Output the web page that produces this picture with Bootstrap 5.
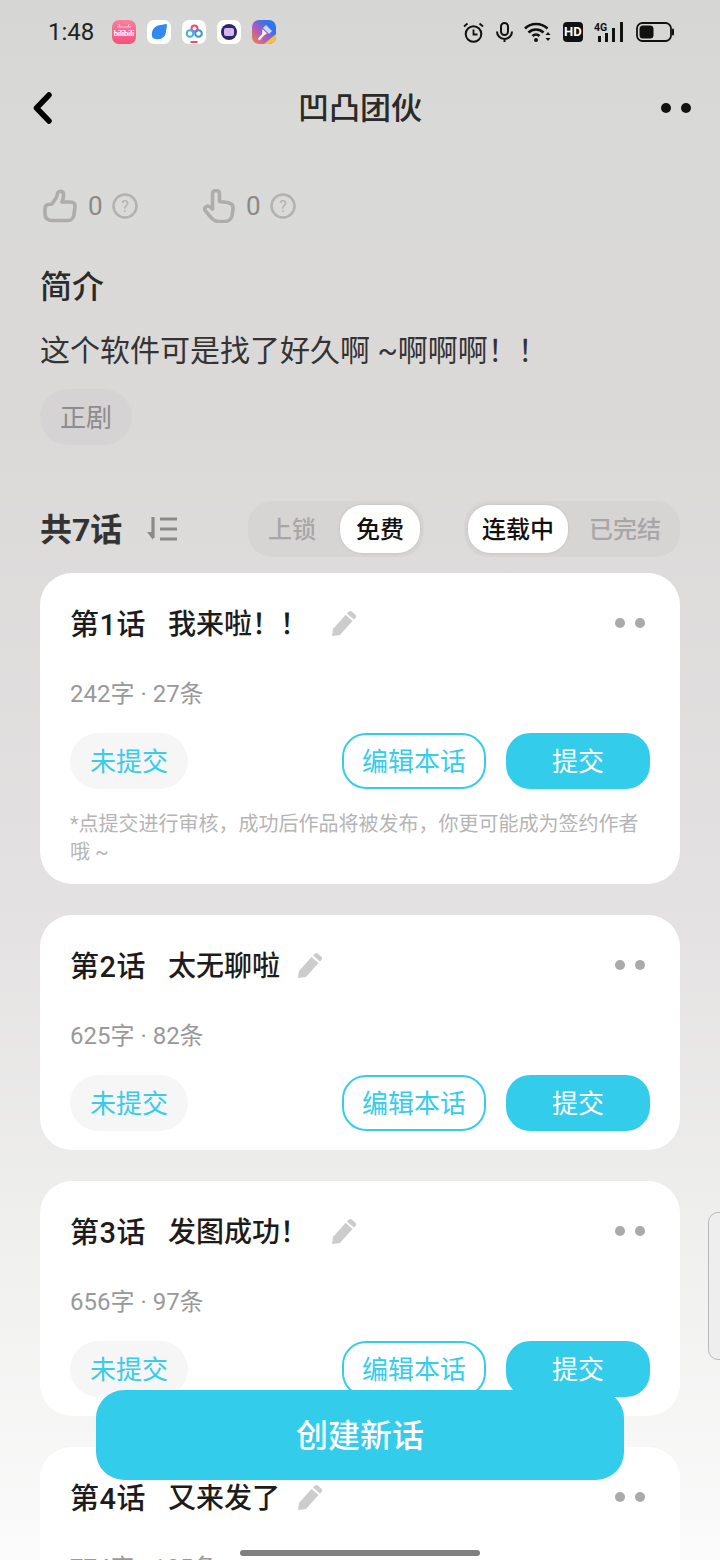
<!DOCTYPE html>
<html lang="zh-CN">
<head>
    <meta charset="UTF-8">
    <meta name="viewport" content="width=device-width, initial-scale=1.0">
    <title>凹凸团伙</title>
    <link href="https://cdn.jsdelivr.net/npm/bootstrap@5.3.0/dist/css/bootstrap.min.css" rel="stylesheet">
    <style>
        html, body { height: 1560px; overflow: hidden; }
        body {
            font-family: Roboto, "Noto Sans CJK SC", sans-serif;
            background: linear-gradient(180deg, #d6d6d4 0, #d9dad7 130px, #dbd9d8 400px, #e3e1e1 900px, #f0f0ef 1250px, #fbfbfb 1560px);
            color: #222;
        }
        .screen { width: 720px; height: 1560px; overflow: hidden; }
        .status-row { height: 64px; padding: 0 46px 0 48px; }
        .clock-text { font-size: 24px; width: 46px; margin-right: 18px; color: #222; line-height: 1; }
        .app-tiles { gap: 11px; }
        .app-tiles svg { display: block; }
        .sys-icons { gap: 11.6px; }
        .hd-box { width: 20px; height: 20px; background: #111; color: #fff; border-radius: 4px; font-size: 13px; font-weight: 700; line-height: 20px; text-align: center; }
        .top-row { height: 88px; padding: 0 29px 0 33px; }
        .top-title { font-size: 31px; font-weight: 500; color: #2a2a2a; line-height: 1; left: 0; right: 0; }
        .round-dots { gap: 10px; }
        .round-dots i { display: block; width: 10px; height: 10px; border-radius: 50%; background: #111; }
        .content-wrap { padding: 36px 40px 0; }
        .react-row { height: 36px; padding-left: 3px; }
        .react-item { width: 158px; }
        .react-count { font-size: 26px; color: #8b8989; margin: 0 9px 0 11px; line-height: 1; }
        .head-text { font-size: 32px; font-weight: 500; line-height: 44px; margin-top: 41px; color: #2b2b2b; }
        .desc-text { font-size: 30px; line-height: 44px; height: 44px; margin-top: 20px; color: #333; white-space: nowrap; }
        .genre-tag { width: 92px; height: 56px; margin-top: 16px; padding-top: 2px; border-radius: 28px; background: #d5d3d3; color: #8e8c8c; font-size: 26px; }
        .tool-row { height: 56px; margin-top: 56px; }
        .count-text { font-size: 32px; font-weight: 700; color: #333; line-height: 1; margin-right: 25px; padding-top: 1px; }
        .seg-box { height: 56px; padding: 4px; border-radius: 24px; background: #d7d4d4; font-size: 24px; font-weight: 500; color: #a8a6a6; flex: none; }
        .seg-box > span { flex: none; height: 48px; padding-top: 2px; white-space: nowrap; display: flex; align-items: center; justify-content: center; border-radius: 22px; }
        .seg-later { margin-left: 40px; }
        .seg-on { background: #fff; color: #111; box-shadow: 0 0 3px rgba(0, 0, 0, .12); }
        .seg-88 { width: 88px; padding-right: 8px; } .seg-80 { width: 80px; } .seg-100 { width: 100px; } .seg-108 { width: 108px; padding-left: 6px; }
        .ep-list { margin-top: 16px; gap: 31px; }
        .ep-card { border: 0; border-radius: 32px; background: #fff; padding: 32px 30px 19px; }
        .ep-title { height: 36px; font-size: 28px; font-weight: 500; color: #1c1c1c; line-height: 36px; }
        .ep-title > span { padding-top: 2px; height: 36px; }
        .ep-num { margin-right: 22px; font-size: 29px; letter-spacing: .5px; }
        .mark-tc { font-family: "Noto Sans CJK TC", sans-serif; line-height: 1; }
        .ep-pen { margin-left: 17px; margin-top: 2px; }
        .ep-pen-wide { margin-left: 23px; }
        .ep-dots { gap: 10px; padding-right: 5px; margin-top: 0; }
        .ep-dots i { display: block; width: 10px; height: 10px; border-radius: 50%; background: #aaa; }
        .ep-meta { font-size: 24px; color: #999; line-height: 36px; margin-top: 35px; }
        .ep-actions { margin-top: 21px; height: 56px; }
        .btn.state-btn, .btn.edit-btn, .btn.send-btn { height: 56px; font-size: 26px; padding: 2px 0 0; line-height: 1; color: #35cdea; display: flex; align-items: center; justify-content: center; }
        .btn.state-btn { width: 118px; border-radius: 28px; background: #f6f6f6; border: 0; }
        .btn.edit-btn { width: 144px; border-radius: 24px; background: #fff; border: 2px solid #35cdea; margin-right: 20px; }
        .btn.send-btn { width: 144px; border-radius: 24px; background: #33cdeb; border: 0; color: #fff; }
        .ep-note { font-size: 20px; line-height: 28px; color: #b5b5b5; margin-top: 21px; margin-bottom: -1px; }
        .btn.new-btn { left: 96px; top: 1390px; width: 528px; height: 90px; padding-top: 8px; border: 0; border-radius: 28px; background: #33cdeb; color: #fff; font-size: 32px; font-weight: 500; }
        .home-bar { left: 240px; top: 1550px; width: 240px; height: 6px; border-radius: 3px; background: #808080; }
        .side-handle { left: 708px; top: 1212px; width: 14px; height: 148px; border: 1px solid #b9b9b9; border-radius: 10px 0 0 10px; background: #eee; }
    </style>
</head>
<body>
    <div class="screen position-relative">
        <div class="status-row d-flex align-items-center">
            <span class="clock-text">1:48</span>
            <div class="app-tiles d-flex">
                <svg width="24" height="24" viewBox="0 0 24 24">
                    <defs><linearGradient id="pk" x1="0" y1="0" x2="0" y2="1"><stop offset="0" stop-color="#fb7f9d"/><stop offset="1" stop-color="#f4527a"/></linearGradient></defs>
                    <rect width="24" height="24" rx="7" fill="url(#pk)"/>
                    <path d="M5 7h14M7 4l1 3M17 4l-1 3" stroke="#fff" stroke-width=".8" opacity=".7"/>
                    <text x="12" y="16" text-anchor="middle" font-size="7.500" font-weight="700" fill="#fff" font-family="Roboto, sans-serif">bilibili</text>
                </svg>
                <svg width="24" height="24" viewBox="0 0 24 24">
                    <rect width="24" height="24" rx="7" fill="#fff"/>
                    <path d="M5 16C4 10 8 5 14 5l5-1c1 0 1 1 1 2l-1 5c0 6-5 9-10 8-2 0-4-1-4-3z" fill="#2f8bef"/>
                </svg>
                <svg width="24" height="24" viewBox="0 0 24 24">
                    <rect width="24" height="24" rx="7" fill="#fff"/>
                    <circle cx="12.500" cy="8.500" r="3" fill="none" stroke="#ee4a72" stroke-width="2"/>
                    <circle cx="8" cy="13.500" r="3.300" fill="none" stroke="#38b4e6" stroke-width="2"/>
                    <circle cx="16.500" cy="13.500" r="3.300" fill="none" stroke="#3a8ee6" stroke-width="2"/>
                    <rect x="8.500" y="21" width="7" height="2" fill="#e8506a"/>
                </svg>
                <svg width="24" height="24" viewBox="0 0 24 24">
                    <rect width="24" height="24" rx="7" fill="#fff"/>
                    <circle cx="12" cy="12" r="8" fill="#2c2566"/>
                    <rect x="7" y="8" width="10" height="8" rx="2" fill="#d5b5f0"/>
                </svg>
                <svg width="24" height="24" viewBox="0 0 24 24">
                    <defs><linearGradient id="mx" x1="0" y1="1" x2="1" y2="0"><stop offset="0" stop-color="#f5863a"/><stop offset=".4" stop-color="#b05ac0"/><stop offset=".75" stop-color="#2f74ea"/><stop offset="1" stop-color="#2a7df0"/></linearGradient></defs>
                    <rect width="24" height="24" rx="7" fill="url(#mx)"/>
                    <path d="M24 14v3a7 7 0 0 1-7 7h-5z" fill="#f2c23e"/>
                    <path d="M11 8l3-3 6 6-3 3z" fill="#cfd6f6"/>
                    <path d="M10.500 9l4.500 4.500-3 2-1 1-3 3.500c-1 .8-2.500-.6-1.800-1.700l3-3.300 .8-1z" fill="#fff3df"/>
                </svg>
            </div>
            <div class="sys-icons d-flex align-items-center ms-auto">
                <svg width="21" height="21" viewBox="0 0 21 21" fill="none" stroke="#111" stroke-width="2">
                    <circle cx="10.500" cy="12" r="7.800"/>
                    <path d="M10.500 7.500V12.500H14.500" stroke-width="1.800"/>
                    <path d="M1 4.500L4.500 1.500M20 4.500L16.500 1.500" stroke-width="1.800"/>
                </svg>
                <svg width="17" height="20" viewBox="0 0 17 20" fill="none" stroke="#111" stroke-width="2">
                    <rect x="5" y="1" width="7" height="12" rx="3.500"/>
                    <path d="M1 9.500a7.500 7.500 0 0 0 15 0M8.500 17v3"/>
                </svg>
                <svg width="27" height="20" viewBox="0 0 27 20" fill="none" stroke="#111" stroke-width="2.600">
                    <path d="M1 6.500C7 .5 17 .5 23.500 6.500"/>
                    <path d="M4.500 10.500c4-4 11-4 15 0"/>
                    <path d="M8.500 14c2-2 5-2 7 0"/>
                    <circle cx="12" cy="18" r="2" fill="#111" stroke="none"/>
                    <path d="M21.500 13l2.500-3 2.500 3zM21.500 16l2.500 3 2.500-3z" fill="#111" stroke="none"/>
                </svg>
                <span class="hd-box">HD</span>
                <svg width="30" height="20" viewBox="0 0 30 20">
                    <text x="0" y="9" font-size="10.500" font-weight="700" fill="#111" font-family="Roboto, sans-serif">4G</text>
                    <rect x="4" y="14" width="3" height="6" fill="#111"/>
                    <rect x="11" y="11" width="3" height="9" fill="#111"/>
                    <rect x="18" y="6" width="3" height="14" fill="#111"/>
                    <rect x="26" y="0" width="3" height="20" fill="#111"/>
                </svg>
                <svg width="38" height="20" viewBox="0 0 38 20">
                    <rect x="1" y="1" width="34" height="18" rx="5.500" fill="none" stroke="#111" stroke-width="1.800"/>
                    <rect x="3.500" y="3.500" width="14" height="13" rx="3.500" fill="#111"/>
                    <rect x="36" y="6.500" width="2" height="7" rx="1" fill="#111"/>
                </svg>
            </div>
        </div>

        <div class="top-row d-flex align-items-center justify-content-between position-relative">
            <svg width="20" height="32" viewBox="0 0 20 32" fill="none" stroke="#000" stroke-width="5.500" stroke-linecap="round" stroke-linejoin="round">
                <path d="M16 3L3.500 16 16 29"/>
            </svg>
            <div class="top-title position-absolute text-center">凹凸团伙</div>
            <div class="round-dots d-flex"><i></i><i></i></div>
        </div>

        <div class="content-wrap">
            <div class="react-row d-flex align-items-center">
                <div class="react-item d-flex align-items-center">
                    <svg width="34" height="34" viewBox="0 0 34 34" fill="none" stroke="#aeacac" stroke-width="3.600" stroke-linejoin="round">
                        <path d="M9 15l4-6c1.500-2 1-4 2-5.500 1.600-2 5-1.500 5.500 1.500.4 3-.5 5.500-1.500 8h8.500c3 0 5 2 4.500 5l-1.200 8.500c-.5 2.700-2.800 5-5.800 5H9c-4 0-7-2.500-7-6v-6c0-3 2.500-4.500 7-4.500z"/>
                    </svg>
                    <span class="react-count">0</span>
                    <svg width="26" height="26" viewBox="0 0 26 26">
                        <circle cx="13" cy="13" r="11.500" fill="none" stroke="#b3b1b1" stroke-width="2.500"/>
                        <text x="13" y="19" text-anchor="middle" font-size="16" fill="#b3b1b1" font-family="Roboto, sans-serif">?</text>
                    </svg>
                </div>
                <div class="react-item d-flex align-items-center">
                    <svg width="34" height="34" viewBox="0 0 34 34" fill="none" stroke="#aeacac" stroke-width="3.600" stroke-linejoin="round" stroke-linecap="round">
                        <path d="M11.500 20V5c0-2.500 1.500-3.500 3.500-3.500s3.500 1.300 3.500 3.500v7.500l8 1c3.500.6 6 2.800 5.500 6.500l-.8 6c-.6 3.500-3.200 6.500-7.200 6.500h-6.500c-3.500 0-5.500-1.500-7.500-4l-5.500-6.500c-1.800-2.200-.3-4.700 2-5 2-.2 3.500 1.500 5 3"/>
                    </svg>
                    <span class="react-count">0</span>
                    <svg width="26" height="26" viewBox="0 0 26 26">
                        <circle cx="13" cy="13" r="11.500" fill="none" stroke="#b3b1b1" stroke-width="2.500"/>
                        <text x="13" y="19" text-anchor="middle" font-size="16" fill="#b3b1b1" font-family="Roboto, sans-serif">?</text>
                    </svg>
                </div>
            </div>

            <div class="head-text">简介</div>
            <div class="desc-text">这个软件可是找了好久啊 ~啊啊啊<span class="mark-tc">！！</span></div>
            <div class="genre-tag d-flex align-items-center justify-content-center">正剧</div>

            <div class="tool-row d-flex align-items-center">
                <span class="count-text">共7话</span>
                <svg width="30" height="24" viewBox="0 0 30 24" fill="none" stroke="#8b8989" stroke-width="3.200">
                    <path d="M6 0v21"/>
                    <path d="M0 15l6 8V15z" fill="#8b8989" stroke="none"/>
                    <path d="M13 2h17M13 12h17M13 22h17"/>
                </svg>
                <div class="seg-box d-flex ms-auto">
                    <span class="seg-88">上锁</span>
                    <span class="seg-80 seg-on">免费</span>
                </div>
                <div class="seg-box seg-later d-flex">
                    <span class="seg-100 seg-on">连载中</span>
                    <span class="seg-108">已完结</span>
                </div>
            </div>

            <div class="ep-list d-flex flex-column">
                <div class="card ep-card">
                    <div class="ep-title d-flex align-items-center">
                        <span class="ep-num">第1话</span><span>我来啦<span class="mark-tc">！！</span></span>
                        <svg class="ep-pen ep-pen-wide" width="26" height="26" viewBox="0 0 26 26" fill="#ccc">
                            <path d="M1 25l1-7L14.500 4l7 6L9 24z"/>
                            <path d="M16 2.500l2-2c1-.8 2-.6 3 .2l3.500 3c1 .9 1 2 .2 3L23 8.500z"/>
                        </svg>
                        <div class="ep-dots d-flex ms-auto"><i></i><i></i></div>
                    </div>
                    <div class="ep-meta">242字 · 27条</div>
                    <div class="ep-actions d-flex">
                        <button class="btn state-btn me-auto">未提交</button>
                        <button class="btn edit-btn">编辑本话</button>
                        <button class="btn send-btn">提交</button>
                    </div>
                    <div class="ep-note">*点提交进行审核，成功后作品将被发布，你更可能成为签约作者哦 ~</div>
                </div>
                <div class="card ep-card">
                    <div class="ep-title d-flex align-items-center">
                        <span class="ep-num">第2话</span><span>太无聊啦</span>
                        <svg class="ep-pen" width="26" height="26" viewBox="0 0 26 26" fill="#ccc">
                            <path d="M1 25l1-7L14.500 4l7 6L9 24z"/>
                            <path d="M16 2.500l2-2c1-.8 2-.6 3 .2l3.500 3c1 .9 1 2 .2 3L23 8.500z"/>
                        </svg>
                        <div class="ep-dots d-flex ms-auto"><i></i><i></i></div>
                    </div>
                    <div class="ep-meta">625字 · 82条</div>
                    <div class="ep-actions d-flex">
                        <button class="btn state-btn me-auto">未提交</button>
                        <button class="btn edit-btn">编辑本话</button>
                        <button class="btn send-btn">提交</button>
                    </div>
                </div>
                <div class="card ep-card">
                    <div class="ep-title d-flex align-items-center">
                        <span class="ep-num">第3话</span><span>发图成功<span class="mark-tc">！</span></span>
                        <svg class="ep-pen ep-pen-wide" width="26" height="26" viewBox="0 0 26 26" fill="#ccc">
                            <path d="M1 25l1-7L14.500 4l7 6L9 24z"/>
                            <path d="M16 2.500l2-2c1-.8 2-.6 3 .2l3.500 3c1 .9 1 2 .2 3L23 8.500z"/>
                        </svg>
                        <div class="ep-dots d-flex ms-auto"><i></i><i></i></div>
                    </div>
                    <div class="ep-meta">656字 · 97条</div>
                    <div class="ep-actions d-flex">
                        <button class="btn state-btn me-auto">未提交</button>
                        <button class="btn edit-btn">编辑本话</button>
                        <button class="btn send-btn">提交</button>
                    </div>
                </div>
                <div class="card ep-card">
                    <div class="ep-title d-flex align-items-center">
                        <span class="ep-num">第4话</span><span>又来发了</span>
                        <svg class="ep-pen" width="26" height="26" viewBox="0 0 26 26" fill="#ccc">
                            <path d="M1 25l1-7L14.500 4l7 6L9 24z"/>
                            <path d="M16 2.500l2-2c1-.8 2-.6 3 .2l3.500 3c1 .9 1 2 .2 3L23 8.500z"/>
                        </svg>
                        <div class="ep-dots d-flex ms-auto"><i></i><i></i></div>
                    </div>
                    <div class="ep-meta">774字 · 105条</div>
                </div>
            </div>
        </div>

        <button class="btn new-btn position-absolute">创建新话</button>
        <div class="side-handle position-absolute"></div>
        <div class="home-bar position-absolute"></div>
    </div>

    <script src="https://cdn.jsdelivr.net/npm/bootstrap@5.3.0/dist/js/bootstrap.bundle.min.js"></script>
</body>
</html>
